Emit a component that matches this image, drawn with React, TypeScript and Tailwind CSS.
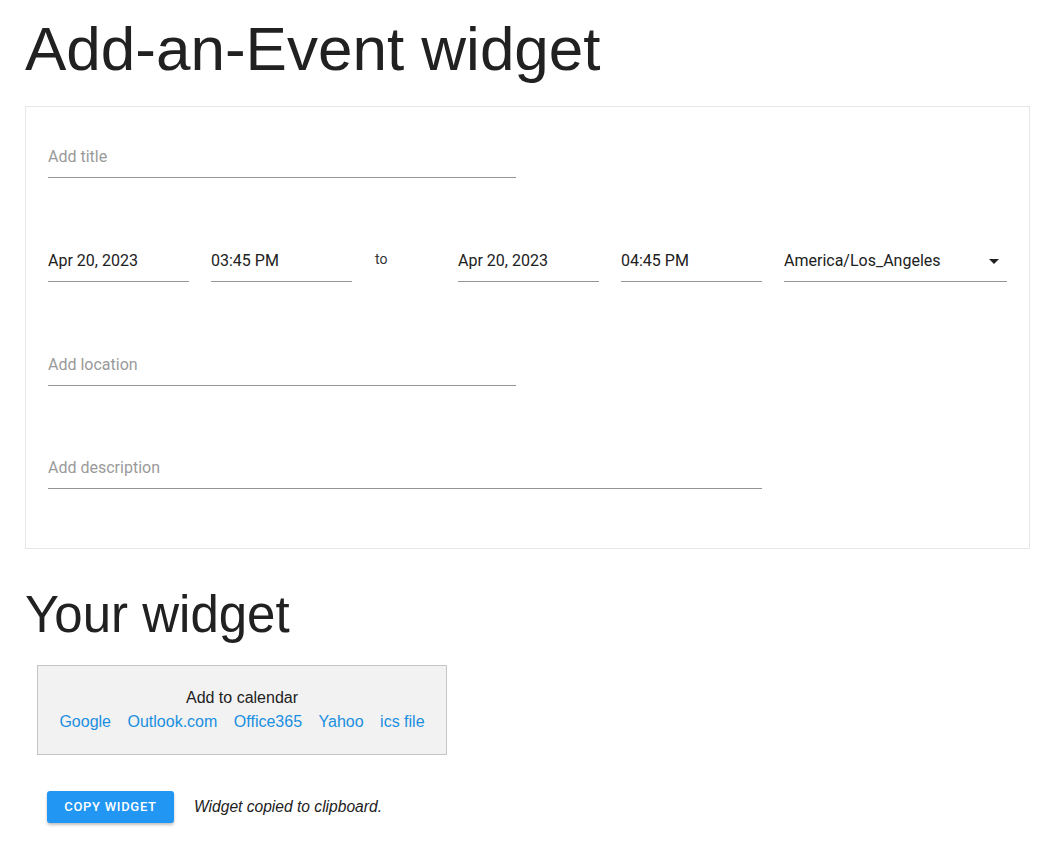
const form = "font-['Roboto',sans-serif]";

function Field({ text, placeholder, width }: { text?: string; placeholder?: string; width: string }) {
  return (
    <div className={`${width} shrink-0 border-b border-[#949494] pb-[11px] text-[16px] leading-[19px] ${form}`}>
      {text ? <span className="text-[#212121]">{text}</span> : <span className="text-[#9a9a9a]">{placeholder}</span>}
    </div>
  );
}

const links = ['Google', 'Outlook.com', 'Office365', 'Yahoo', 'ics file'];

export default function App() {
  return (
    <div className="min-h-screen bg-white pl-[25px] pr-[20px] pb-10 text-[#212121] font-['Liberation_Sans',sans-serif]">
      <h1 className="pt-[14px] text-[62px] font-normal leading-[70px]">Add-an-Event widget</h1>

      <div className="mt-[22px] border border-[#e6e6e6] px-[22px] pt-[40px] pb-[59px]">
        <Field placeholder="Add title" width="w-[468px]" />

        <div className="mt-[73px] flex items-start gap-[22px]">
          <Field text="Apr 20, 2023" width="w-[141px]" />
          <Field text="03:45 PM" width="w-[141px]" />
          <div className={`w-[62px] shrink-0 pl-px text-[14px] leading-[16px] text-[#333] ${form}`}>to</div>
          <Field text="Apr 20, 2023" width="w-[141px]" />
          <Field text="04:45 PM" width="w-[141px]" />
          <div className={`flex w-[223px] shrink-0 items-center justify-between border-b border-[#949494] pb-[11px] text-[16px] leading-[19px] ${form}`}>
            <span>America/Los_Angeles</span>
            <svg viewBox="0 0 24 24" className="mr-[1px] h-6 w-6 -my-[3px] fill-[#212121]">
              <path d="M7 10l5 5 5-5z" />
            </svg>
          </div>
        </div>

        <div className="mt-[73px]">
          <Field placeholder="Add location" width="w-[468px]" />
        </div>

        <div className="mt-[72px]">
          <Field placeholder="Add description" width="w-[714px]" />
        </div>
      </div>

      <h2 className="mt-[36px] text-[51px] font-normal leading-[60px]">Your widget</h2>

      <div className="ml-[12px] mt-[20px] flex h-[90px] w-[410px] flex-col items-center justify-center border border-[#c4c4c4] bg-[#f2f2f2] text-[16px] leading-[24px]">
        <div className="text-[#212121]">Add to calendar</div>
        <div className="flex gap-[16.5px]">
          {links.map((l) => (
            <a key={l} className="text-[#1a8fe0]">
              {l}
            </a>
          ))}
        </div>
      </div>

      <div className="ml-[22px] mt-[36px] flex items-center gap-[20px]">
        <button className="h-[32px] w-[127px] rounded-[3px] bg-[#2196f3] text-[13px] font-medium tracking-[0.7px] text-white shadow-[0_2px_3px_rgba(0,0,0,0.25)] font-['Roboto',sans-serif]">
          COPY WIDGET
        </button>
        <span className="text-[15.6px] italic text-[#212121]">Widget copied to clipboard.</span>
      </div>
    </div>
  );
}
